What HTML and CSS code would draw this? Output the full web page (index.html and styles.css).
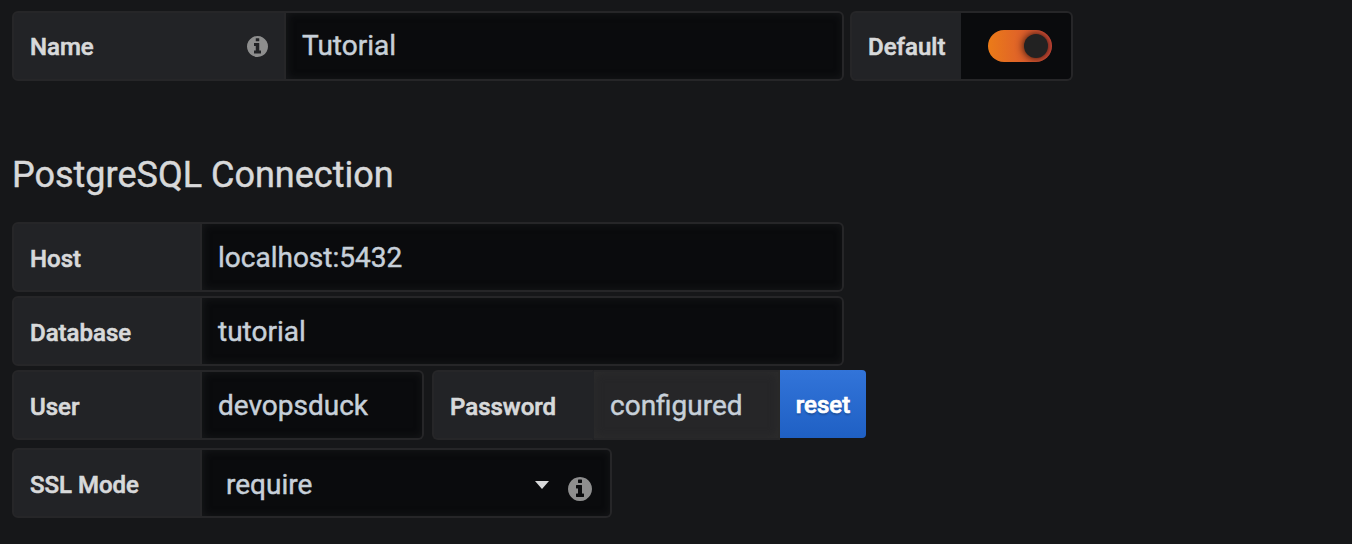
FILE: index.html
```html
<!DOCTYPE html>
<html lang="en">
<head>
<meta charset="utf-8">
<title>PostgreSQL data source</title>
<link rel="stylesheet" href="styles.css">
</head>
<body>
<svg class="symbols" aria-hidden="true">
  <symbol id="info" viewBox="128 128 1536 1536">
    <path d="M1152 1376v-160q0-14-9-23t-23-9h-96v-512q0-14-9-23t-23-9h-320q-14 0-23 9t-9 23v160q0 14 9 23t23 9h96v320h-96q-14 0-23 9t-9 23v160q0 14 9 23t23 9h448q14 0 23-9t9-23zM1024 480v-160q0-14-9-23t-23-9h-192q-14 0-23 9t-9 23v160q0 14 9 23t23 9h192q14 0 23-9t9-23zM1664 896q0 209-103 385.500t-279.500 279.500-385.500 103-385.500-103-279.500-279.500-103-385.500 103-385.500 279.500-279.500 385.500-103 385.500 103 279.500 279.500 103 385.500z"/>
  </symbol>
</svg>
<main class="settings">
  <div class="row row-name">
    <div class="field field-name">
      <div class="label"><span class="text">Name</span><svg class="info"><use href="#info"/></svg></div>
      <div class="input">Tutorial</div>
    </div>
    <div class="field field-default">
      <div class="label"><span class="text">Default</span></div>
      <div class="switch-cell"><div class="switch"><div class="knob"></div></div></div>
    </div>
  </div>
  <h3 class="heading">PostgreSQL Connection</h3>
  <div class="row">
    <div class="field field-wide">
      <div class="label">Host</div>
      <div class="input">localhost:5432</div>
    </div>
  </div>
  <div class="row">
    <div class="field field-wide">
      <div class="label">Database</div>
      <div class="input">tutorial</div>
    </div>
  </div>
  <div class="row row-user">
    <div class="field field-user">
      <div class="label">User</div>
      <div class="input">devopsduck</div>
    </div>
    <div class="field field-password">
      <div class="label">Password</div>
      <div class="input disabled">configured</div>
      <div class="button">reset</div>
    </div>
  </div>
  <div class="row">
    <div class="field field-ssl">
      <div class="label">SSL Mode</div>
      <div class="input select"><span class="value">require</span><span class="caret"></span><svg class="info info-large"><use href="#info"/></svg></div>
    </div>
  </div>
</main>
</body>
</html>
```
FILE: styles.css
```css
* {
  box-sizing: border-box;
}

body {
  margin: 0;
  height: 544px;
  overflow: hidden;
  background: #161719;
  color: #d8d9da;
  font-family: Roboto, "Liberation Sans", sans-serif;
  -webkit-text-stroke: 0.45px;
}

.symbols {
  display: none;
}

.settings {
  padding: 11px 12px 0;
}

.row {
  display: flex;
  margin-bottom: 4px;
}

.row-name {
  gap: 6px;
  margin-bottom: 0;
}

.row-user {
  gap: 8px;
  margin-bottom: 8px;
}

.field {
  display: flex;
  height: 70px;
}

.label {
  display: flex;
  align-items: center;
  justify-content: space-between;
  flex: none;
  width: 190px;
  padding: 4px 16px 0;
  border: 2px solid #262628;
  border-radius: 6px 0 0 6px;
  background: #222326;
  font-size: 24px;
  font-weight: 500;
  -webkit-text-stroke: 0.6px;
}

.row-name .label {
  padding-top: 0;
}

.text {
  padding-top: 2px;
}

.input {
  display: flex;
  align-items: center;
  flex: 1;
  padding: 0 16px;
  border: 2px solid #262628;
  border-left: 0;
  border-radius: 0 6px 6px 0;
  background: #0a0b0d;
  box-shadow: inset 1px 0 8px rgba(34, 35, 36, 0.6);
  color: #c7d0d9;
  font-size: 28px;
}

.field-name .input {
  padding-bottom: 2px;
}

.field-name {
  width: 832px;
}

.field-name .label {
  width: 274px;
}

.field-default {
  width: 223px;
}

.field-default .label {
  width: 111px;
  border-right: 0;
  padding-right: 0;
}

.field-wide {
  width: 832px;
}

.field-user {
  width: 412px;
}

.field-password {
  width: 434px;
}

.field-password .label {
  width: 162px;
  border-right-color: #222326;
}

.field-ssl {
  width: 600px;
}

.info {
  width: 21px;
  height: 21px;
  fill: #8e8e8e;
}

.info-large {
  width: 24px;
  height: 24px;
  margin: 12px 2px 0 19px;
}

.switch-cell {
  display: flex;
  align-items: center;
  justify-content: center;
  flex: 1;
  padding-left: 8px;
  border: 2px solid #262628;
  border-left: 0;
  border-radius: 0 6px 6px 0;
  background: #0a0b0d;
}

.switch {
  display: flex;
  align-items: center;
  justify-content: flex-end;
  width: 64px;
  height: 32px;
  padding-right: 4px;
  border-radius: 16px;
  overflow: hidden;
  background: linear-gradient(90deg, #eb7b18, #d44a3a);
}

.knob {
  width: 24px;
  height: 24px;
  border-radius: 50%;
  background: #222;
  box-shadow: 0 0 8px rgba(0, 0, 0, 0.9);
}

.heading {
  margin: 69px 0 22px;
  font-size: 36px;
  font-weight: 400;
  line-height: 50px;
}

.disabled {
  border-radius: 0;
  border-right-color: #282828;
  background: #262628;
  box-shadow: inset 0 0 10px rgba(46, 46, 46, 0.8);
}

.button {
  width: 86px;
  height: 68px;
  border-radius: 0 4px 4px 0;
  background: linear-gradient(#3274d9, #1f60c4);
  color: #fff;
  font-size: 24px;
  font-weight: 500;
  line-height: 71px;
  text-align: center;
  text-shadow: 0 2px 2px rgba(0, 0, 0, 0.25);
  -webkit-text-stroke: 0.7px;
}

.select {
  padding-left: 24px;
}

.value {
  flex: 1;
  padding-top: 2px;
}

.caret {
  width: 14px;
  height: 8px;
  margin-top: 4px;
  background: #d8d9da;
  clip-path: polygon(0 0, 100% 0, 50% 100%);
}
```
